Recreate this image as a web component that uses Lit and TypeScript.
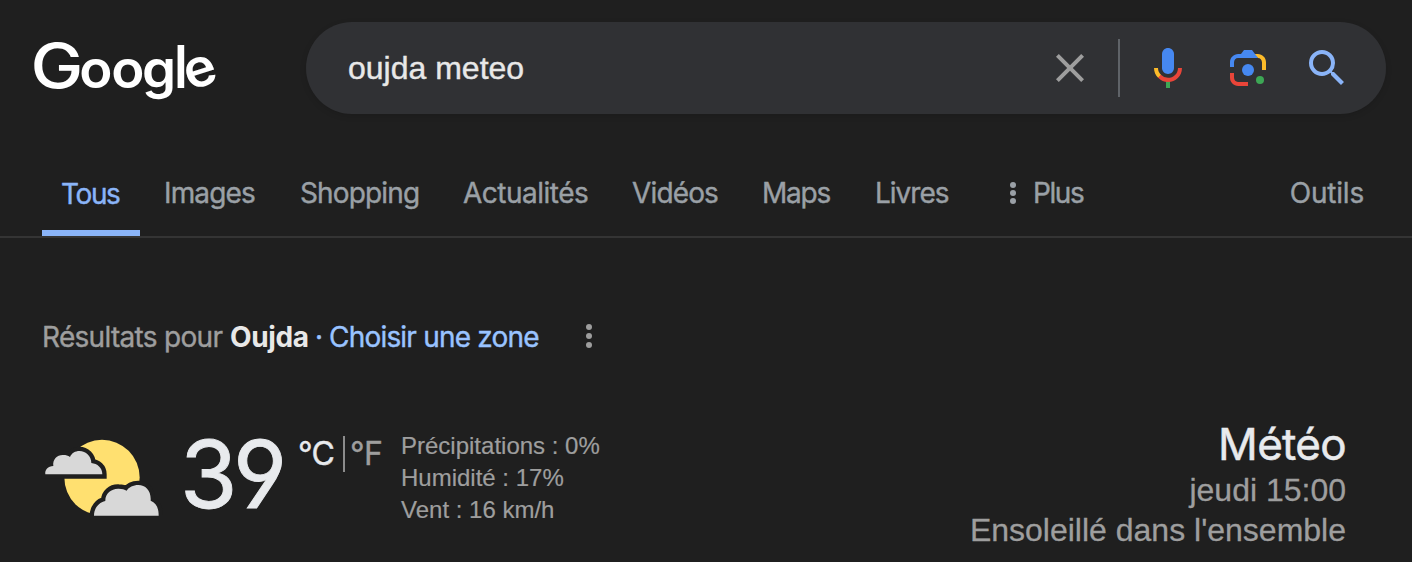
import { LitElement, html, css, svg } from "lit";
import { customElement, property } from "lit/decorators.js";

@customElement("google-logo")
class GoogleLogo extends LitElement {
  static styles = css`
    :host { display: block; width: 190px; height: 92px; }
    svg { display: block; overflow: visible; }
    text { font-family: "Inter", sans-serif; font-size: 53px; font-weight: 600; fill: #fff; }
    .g { font-size: 62px; font-weight: 500; }
    .l { font-size: 59px; font-weight: 500; }
  `;
  render() {
    return html`<svg width="190" height="92" viewBox="30 22 190 92" role="img" aria-label="Google">
      <text class="g" transform="translate(30.6 87.5) scale(1.14 1)">G</text>
      <text transform="translate(79.3 87.5) scale(1.03 1)" y="0 0 0 0 3" x="0 31 61 91.3 107" rotate="0 0 0 0 -18">oog<tspan class="l">l</tspan>e</text>
    </svg>`;
  }
}

@customElement("search-bar")
class SearchBar extends LitElement {
  @property() query = "";
  static styles = css`
    :host { display: flex; align-items: center; box-sizing: border-box; width: 1080px; height: 92px; padding: 0 35px 0 42px; border-radius: 46px; background: #303134; box-shadow: 0 2px 6px rgba(0,0,0,.12); }
    .query { flex: 1; font: 32px/40px "Liberation Sans", sans-serif; color: #e8e8e8; -webkit-text-stroke: 0.4px currentColor; }
    svg { display: block; width: 48px; height: 48px; }
    .divider { width: 2px; height: 58px; margin: 0 24px; background: #5f6368; }
    .lens { margin: 0 31px 0 32px; }
  `;
  render() {
    return html`
      <span class="query">${this.query}</span>
      <svg viewBox="0 0 24 24" fill="#9e9e9e"><path d="M19 6.41L17.59 5 12 10.59 6.41 5 5 6.41 10.59 12 5 17.59 6.41 19 12 13.41 17.59 19 19 17.59 13.41 12z"/></svg>
      <span class="divider"></span>
      <svg viewBox="0 0 24 24">
        <path fill="#4688f1" d="M12 15c1.66 0 3-1.31 3-2.97V5.01C15 3.35 13.66 2 12 2S9 3.34 9 5.01v7.02C9 13.69 10.34 15 12 15z"/>
        <path fill="#3da755" d="M11 18.08h2V22h-2z"/>
        <path fill="#fcbb2a" d="M7.05 16.87C5.78 15.54 5 14.04 5 12h2c0 1.45.56 2.42 1.47 3.38v.32l-1.15 1.18z"/>
        <path fill="#e94539" d="M12 16.93a4.97 5.25 0 0 1-3.54-1.55l-1.41 1.49C8.31 18.21 10.07 19 12 19c3.87 0 6.99-2.92 6.99-7H17c0 2.92-2.24 4.93-5 4.93z"/>
      </svg>
      <svg class="lens" viewBox="0 0 192 192">
        <circle fill="#3da755" cx="144" cy="144" r="16"/>
        <circle fill="#4688f1" cx="96" cy="104" r="24"/>
        <path fill="#e94539" d="M24 135.2C24 153.31 38.69 168 56.8 168H96v-16l-40.1-.1C47.1 151.9 40 143.71 40 134v-18H24z"/>
        <path fill="#fcbb2a" d="M168 72.8C168 54.69 153.31 40 135.2 40H116l20 16c8.8 0 16 8.29 16 18v30h16z"/>
        <path fill="#4688f1" d="M112 24H80L68 40H56.8C38.69 40 24 54.69 24 72.8V92h16V74c0-9.71 7.2-18 16-18h80z"/>
      </svg>
      <svg viewBox="0 0 24 24" fill="#8ab4f8"><path d="M15.5 14h-.79l-.28-.27A6.471 6.471 0 0 0 16 9.5 6.5 6.5 0 1 0 9.5 16c1.61 0 3.09-.59 4.23-1.57l.27.28v.79l5 4.99L20.49 19l-4.99-5zm-6 0C7.01 14 5 11.99 5 9.5S7.01 5 9.5 5 14 7.01 14 9.5 11.99 14 9.5 14z"/></svg>
    `;
  }
}

const dots = (fill: string, step: number) => svg`
  <circle cx="4" cy="${16 - step}" r="3" fill="${fill}"/>
  <circle cx="4" cy="16" r="3" fill="${fill}"/>
  <circle cx="4" cy="${16 + step}" r="3" fill="${fill}"/>`;

@customElement("result-tabs")
class ResultTabs extends LitElement {
  static styles = css`
    :host { display: block; box-sizing: border-box; height: 84px; padding: 0 48px 0 42px; border-bottom: 2px solid #343434; }
    nav { display: flex; height: 82px; font: 28px/40px "Inter", sans-serif; letter-spacing: -0.85px; color: #9aa0a6; -webkit-text-stroke: 0.4px currentColor; }
    .tab { box-sizing: border-box; padding-top: 19px; white-space: nowrap; }
    .active { width: 98px; margin-right: 24px; padding: 20px 0 0 19px; border-bottom: 6px solid #8ab4f8; color: #8ab4f8; letter-spacing: -1.4px; }
    .images { width: 136px; }
    .shopping { width: 163px; }
    .actualites { width: 169px; letter-spacing: -0.5px; }
    .videos { width: 130px; }
    .maps { width: 113px; letter-spacing: -1.2px; }
    .livres { width: 134px; letter-spacing: -1px; }
    .more { display: flex; gap: 16px; flex: 1; letter-spacing: -1.4px; }
    .tools { letter-spacing: -0.2px; }
    svg { display: block; width: 8px; height: 32px; margin-top: 4px; }
  `;
  render() {
    return html`<nav>
      <span class="tab active">Tous</span>
      <span class="tab images">Images</span>
      <span class="tab shopping">Shopping</span>
      <span class="tab actualites">Actualités</span>
      <span class="tab videos">Vidéos</span>
      <span class="tab maps">Maps</span>
      <span class="tab livres">Livres</span>
      <span class="tab more"><svg viewBox="0 0 8 32">${dots("#9aa0a6", 8)}</svg>Plus</span>
      <span class="tab tools">Outils</span>
    </nav>`;
  }
}

@customElement("weather-card")
class WeatherCard extends LitElement {
  static styles = css`
    :host { display: block; padding: 79px 66px 0 42px; font-family: "Liberation Sans", sans-serif; color: #9e9e9e; }
    .location { display: flex; height: 40px; font: 28px/41px "Inter", sans-serif; letter-spacing: -0.7px; white-space: nowrap; -webkit-text-stroke: 0.4px currentColor; }
    .prefix { width: 188px; }
    .city { width: 85px; color: #e8e8e8; font-weight: 700; letter-spacing: -0.4px; -webkit-text-stroke: 0; }
    .sep { width: 14px; color: #99c3ff; }
    .choose { width: 256px; color: #99c3ff; letter-spacing: -0.8px; }
    .location svg { width: 8px; height: 32px; margin-top: 3px; }
    .current { display: flex; margin-top: 63px; }
    .icon { width: 140px; height: 110px; margin-left: -12px; }
    .cloud { fill: #d8d8d8; stroke: #1f1f1f; stroke-width: 26; paint-order: stroke; }
    .temp { width: 119px; margin: -1px 0 0 10px; font: 93px/110px "Inter", sans-serif; font-feature-settings: "cv04"; letter-spacing: -4.5px; color: #e8eaed; -webkit-text-stroke: 0.9px currentColor; }
    .units { display: flex; width: 102px; margin: 16px 0 0 -1px; font: 32px/36px "Inter", sans-serif; letter-spacing: -0.6px; -webkit-text-stroke: 0.4px currentColor; }
    .unit-c { width: 45px; color: #e8eaed; }
    .unit-f { margin-left: 5px; }
    .rule { width: 2px; height: 36px; background: #8c8c8c; }
    .details { flex: 1; margin: 10px 0 0 1px; font-size: 24px; line-height: 32px; -webkit-text-stroke: 0.2px currentColor; }
    .summary { margin-top: -2px; text-align: right; font-size: 32px; line-height: 40px; -webkit-text-stroke: 0.3px currentColor; }
    .title { font: 44px/52px "Inter", sans-serif; color: #e8eaed; letter-spacing: -0.7px; -webkit-text-stroke: 0.5px currentColor; }
  `;
  render() {
    return html`
      <div class="location">
        <span class="prefix">Résultats pour</span>
        <span class="city">Oujda</span>
        <span class="sep">·</span>
        <span class="choose">Choisir une zone</span>
        <svg viewBox="0 0 8 32">${dots("#9e9e9e", 9)}</svg>
      </div>
      <div class="current">
        <svg class="icon" viewBox="0 0 420 330">
          <circle cx="216" cy="172.5" r="113" fill="#ffe070"/>
          <path class="cloud" d="M46 163c-2-14 8-25 24-25c-3-20 12-34 30-33c8 0 14 2 20 6c5-12 16-18 28-18c20 0 36 16 36 36c18 2 33 14 33 34z"/>
          <path class="cloud" d="M192 287c0-22 14-40 34-44c-1-22 18-38 40-37c10 0 18 2 24 6c6-10 20-17 35-17c22 0 39 17 37 47c16 6 24 20 24 45z"/>
        </svg>
        <div class="temp">39</div>
        <div class="units"><span class="unit-c">°C</span><span class="rule"></span><span class="unit-f">°F</span></div>
        <div class="details">
          <div>Précipitations : 0%</div>
          <div>Humidité : 17%</div>
          <div>Vent : 16 km/h</div>
        </div>
        <div class="summary">
          <div class="title">Météo</div>
          <div>jeudi 15:00</div>
          <div>Ensoleillé dans l'ensemble</div>
        </div>
      </div>
    `;
  }
}

@customElement("app-root")
class AppRoot extends LitElement {
  static styles = css`
    :host { display: block; width: 1412px; height: 562px; overflow: hidden; background: #1f1f1f; }
    header { display: flex; box-sizing: border-box; height: 154px; padding: 22px 26px 0 30px; }
    google-logo { margin-right: 86px; }
  `;
  render() {
    return html`
      <header><google-logo></google-logo><search-bar query="oujda meteo"></search-bar></header>
      <result-tabs></result-tabs>
      <weather-card></weather-card>
    `;
  }
}
